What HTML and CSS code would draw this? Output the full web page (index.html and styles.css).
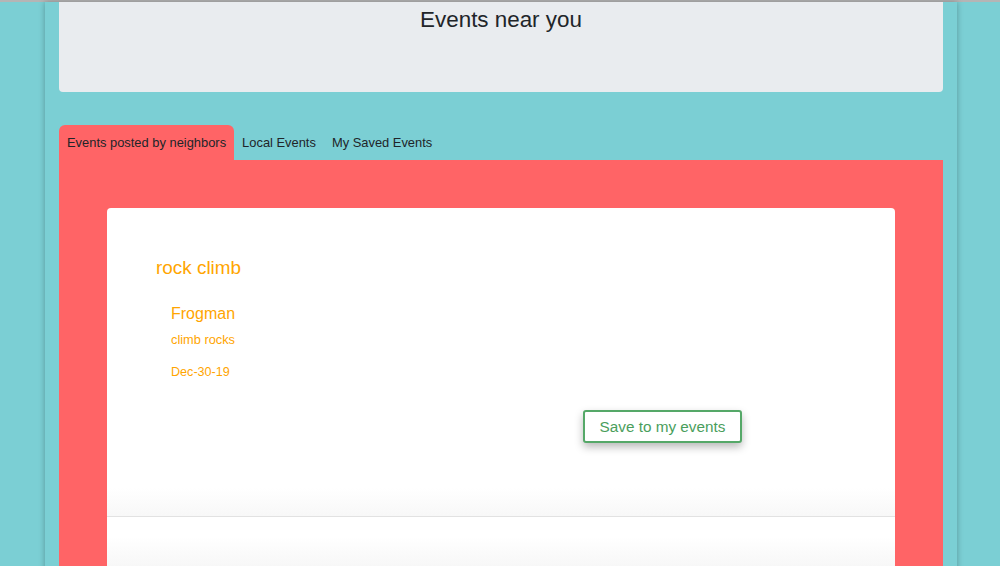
FILE: index.html
```html
<!DOCTYPE html>
<html>
<head>
<meta charset="utf-8">
<link rel="stylesheet" href="styles.css">
</head>
<body>
<div class="topline"></div>
<div class="page">
  <div class="jumbo">
    <h1 class="title">Events near you</h1>
  </div>
  <div class="tabs">
    <div class="tab active">Events posted by neighbors</div>
    <div class="tab">Local Events</div>
    <div class="tab">My Saved Events</div>
  </div>
  <div class="panel">
    <div class="card">
      <h2 class="ev-title">rock climb</h2>
      <div class="ev-body">
        <div class="ev-user">Frogman</div>
        <div class="ev-desc">climb rocks</div>
        <div class="ev-date">Dec-30-19</div>
      </div>
      <div class="actions">
        <button class="save">Save to my events</button>
      </div>
    </div>
    <div class="card second"></div>
  </div>
</div>
</body>
</html>
```
FILE: styles.css
```css
html, body {
  margin: 0;
  padding: 0;
  height: 566px;
  overflow: hidden;
}
body {
  background: #7bcfd4;
  font-family: "Liberation Sans", Arial, sans-serif;
  color: #212529;
  padding-left: 2px;
}
.topline {
  height: 2px;
  background: #b5b5b5;
  margin-left: -2px;
}
.page {
  width: 884px;
  margin: 0 auto;
  padding: 0 14px;
  height: 600px;
  background: #7bcfd4;
  box-shadow: 0 0 6px rgba(0,0,0,0.28);
}
.jumbo {
  background: #e9ecef;
  height: 90px;
  border-radius: 0 0 4px 4px;
  display: flex;
  justify-content: center;
}
.title {
  margin: 4px 0 0;
  font-size: 22.4px;
  font-weight: 400;
  line-height: 28px;
}
.tabs {
  display: flex;
  margin-top: 33px;
  height: 35px;
  align-items: stretch;
}
.tab {
  font-size: 12.9px;
  padding: 0 8px 1px;
  display: flex;
  align-items: center;
  color: #212529;
}
.tab.active {
  background: #ff6466;
  border-radius: 6px 6px 0 0;
}
.panel {
  background: #ff6466;
  padding: 48px 48px 0;
  height: 400px;
}
.card {
  background: linear-gradient(to bottom, #ffffff 0, #ffffff 280px, #f8f8f8 307px);
  border-radius: 4px 4px 0 0;
  height: 308px;
  border-bottom: 1px solid #e2e2e2;
  padding: 0 48px;
}
.card.second {
  border-radius: 0;
  height: 60px;
  background: linear-gradient(to bottom, #ffffff 0, #ffffff 20px, #f7f7f7 50px);
  border-bottom: none;
}
.ev-title {
  margin: 0;
  padding-top: 48px;
  padding-left: 1px;
  font-size: 18.9px;
  font-weight: 400;
  color: #ffa500;
  line-height: 24px;
}
.ev-body {
  padding-left: 16px;
  color: #ffa500;
  margin-top: 23px;
}
.ev-user {
  font-size: 16px;
  line-height: 22px;
}
.ev-desc {
  font-size: 12.8px;
  margin-top: 8px;
  line-height: 14px;
}
.ev-date {
  font-size: 12.6px;
  margin-top: 18px;
  line-height: 14px;
}
.actions {
  margin-top: 31px;
  padding-left: 428px;
}
.save {
  background: #fff;
  border: 2px solid #55a868;
  color: #4a9e5c;
  border-radius: 3px;
  font-family: "Liberation Sans", Arial, sans-serif;
  font-size: 15.3px;
  width: 159px;
  height: 33px;
  padding: 0;
  box-shadow: 0 4px 8px rgba(0,0,0,0.28);
}
```
